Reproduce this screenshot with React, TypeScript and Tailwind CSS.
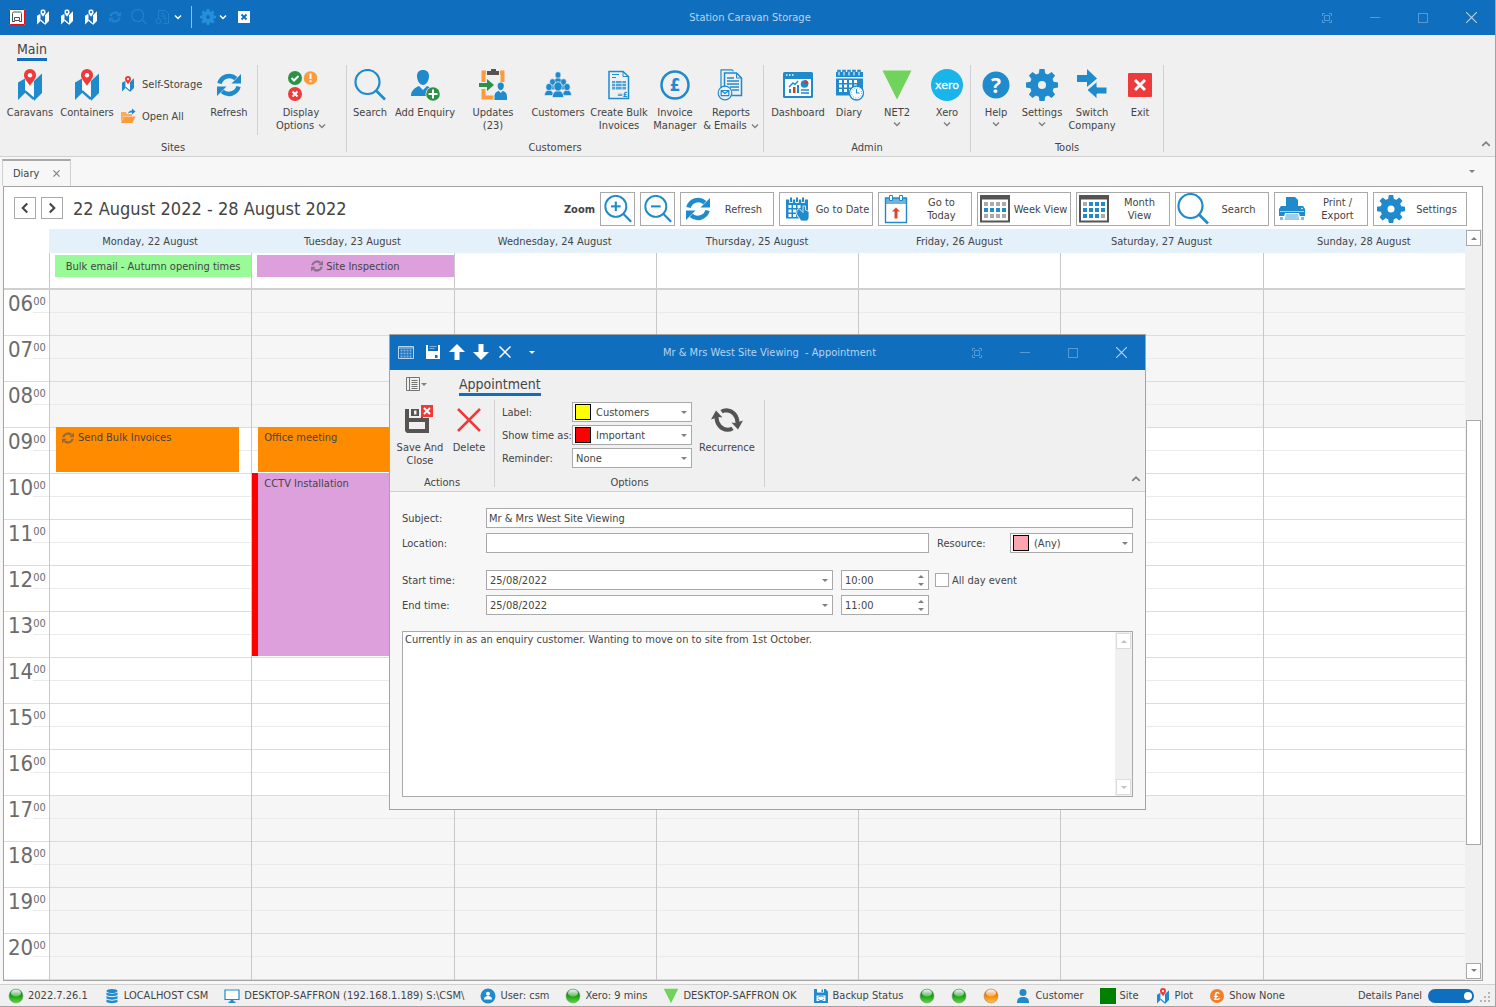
import type { ReactNode } from "react";

const BLUE = "#1f8acc";
const RED = "#ee3a3a";
const GREEN = "#2b9147";
const ORANGE = "#fd9a3c";
const DARK = "#555453";

/* ---------- Icons ---------- */

type IconProps = { className?: string };

function MapIcon({ className = "w-6 h-8", mono = false }: IconProps & { mono?: boolean }) {
  const main = mono ? "#fff" : BLUE;
  return (
    <svg viewBox="0 0 24 32" className={className} aria-hidden="true">
      <path d="M0 13.5 7 9.5V24L0 31z" fill={main} />
      <path d="M16 12 24 4.5V24L16 32z" fill={main} />
      <path d="M7 22 16 30" stroke={main} strokeWidth="2.6" fill="none" />
      {mono ? null : <path d="M7.5 12h8v16l-8-7z" fill="#fff" opacity=".75" />}
      <path
        d="M12 0a6 6 0 0 1 6 6.2c0 4-4 6.800-6 10.800-2-4-6-6.800-6-10.800A6 6 0 0 1 12 0z"
        fill={mono ? "#fff" : RED}
        stroke={mono ? "#106ebe" : "none"}
        strokeWidth={mono ? 1.5 : 0}
      />
      <circle cx="12" cy="6.200" r="2.200" fill={mono ? "#106ebe" : "#fff"} />
    </svg>
  );
}

function RefreshIcon({ className = "w-6 h-6", color = BLUE }: IconProps & { color?: string }) {
  const half = (
    <>
      <path d="M2.500 10.500A10 10 0 0 1 18.800 5.600" fill="none" stroke={color} strokeWidth="4.600" />
      <path d="M24 1v9.500h-9.500z" fill={color} />
    </>
  );
  return (
    <svg viewBox="0 0 24 24" className={className} aria-hidden="true">
      {half}
      <g transform="rotate(180 12 12)">{half}</g>
    </svg>
  );
}

function SearchIcon({ className = "size-8", sign = "", color = BLUE }: IconProps & { sign?: string; color?: string }) {
  return (
    <svg viewBox="0 0 32 32" className={className} fill="none" stroke={color} aria-hidden="true">
      <circle cx="13.500" cy="13" r="12" strokeWidth="2.200" />
      <path d="m22 21.500 9 9" strokeWidth="2.600" />
      {sign ? <path d="M8 13h11" strokeWidth="2.400" /> : null}
      {sign === "+" ? <path d="M13.500 7.500v11" strokeWidth="2.400" /> : null}
    </svg>
  );
}

function GearIcon({ className = "size-8", color = BLUE }: IconProps & { color?: string }) {
  return (
    <svg viewBox="0 0 32 32" className={className} aria-hidden="true">
      <circle cx="16" cy="16" r="8" fill="none" stroke={color} strokeWidth="8" />
      {[0, 45, 90, 135, 180, 225, 270, 315].map((a) => (
        <path key={a} d="M13.500 0h5l1 6h-7z" fill={color} transform={`rotate(${a} 16 16)`} />
      ))}
    </svg>
  );
}

function FolderIcon() {
  return (
    <svg viewBox="0 0 16 16" className="size-4" aria-hidden="true">
      <path d="M1 14V4h5l1 2h5v2H4z" fill={ORANGE} opacity=".8" />
      <path d="M4 8.500h11.500L12.500 15H1z" fill={ORANGE} />
      <path d="M8 5.500c.5-2 2-3 4-3V.5l3.500 3L12 6.500v-2c-1.500 0-2.500.2-4 1z" fill={BLUE} />
    </svg>
  );
}

function DisplayOptionsIcon() {
  return (
    <svg viewBox="0 0 32 32" className="size-8" aria-hidden="true">
      <circle cx="10" cy="9" r="7" fill={GREEN} />
      <path d="m6.500 9 2.500 2.500 4.500-4.500" stroke="#fff" strokeWidth="2" fill="none" />
      <circle cx="25.500" cy="9" r="6.800" fill={ORANGE} />
      <path d="M25.500 4.500v5.500M25.500 11.300v2" stroke="#fff" strokeWidth="2" />
      <circle cx="10" cy="25" r="7" fill={RED} />
      <path d="m7.500 22.500 5 5m0-5-5 5" stroke="#fff" strokeWidth="2" />
    </svg>
  );
}

function Person({ x = 0, y = 0, s = 1, fill = BLUE }: { x?: number; y?: number; s?: number; fill?: string }) {
  return (
    <g transform={`translate(${x} ${y}) scale(${s})`} fill={fill}>
      <path d="M12 0c4 0 6.200 2.500 6 6.500C17.800 11 15 15 12 15S6.200 11 6 6.500C5.800 2.500 8 0 12 0z" />
      <path d="M0 26c0-5 3-8 8-10l4 4 4-4c5 2 8 5 8 10z" />
    </g>
  );
}

function AddEnquiryIcon() {
  return (
    <svg viewBox="0 0 32 32" className="size-8" aria-hidden="true">
      <Person x={2} y={1} />
      <circle cx="24" cy="25" r="7.500" fill="#f0f0f0" />
      <circle cx="24" cy="25" r="6.800" fill={GREEN} />
      <path d="M24 20.500v9M19.500 25h9" stroke="#fff" strokeWidth="2" />
    </svg>
  );
}

function UpdatesIcon() {
  return (
    <svg viewBox="0 0 32 32" className="size-8" aria-hidden="true">
      <path d="M6.500 13V3.500h2.500M23 3.500h2.500V13M6.500 20v8.500h10" fill="none" stroke={ORANGE} strokeWidth="4" />
      <path d="M10 6V2h4V0h5v2h3v4z" fill={DARK} />
      <path d="M2 14h8v-4l7 6-7 6v-4H2z" fill={GREEN} />
      <Person x={17.500} y={13.500} s={0.52} />
      <path d="M17.500 27h12.500v4H17.500z" fill={BLUE} />
    </svg>
  );
}

function CustomersIcon() {
  const members: [number, number, number][] = [
    [16, 6, 0.9],
    [10.500, 13, 0.9],
    [21.500, 13, 0.9],
    [7, 18, 1],
    [25, 18, 1],
    [16, 17.500, 1.300],
  ];
  return (
    <svg viewBox="0 0 32 32" className="size-8" aria-hidden="true">
      {members.map(([x, y, s]) => (
        <g key={`${x}-${y}`} transform={`translate(${x} ${y}) scale(${s})`} fill={BLUE} stroke="#f0f0f0" strokeWidth=".6">
          <path d="M-4.500 8.500C-4.500 5.500-3 4-1.500 3.200h3C3 4 4.500 5.500 4.500 8.500z" />
          <ellipse cx="0" cy="0" rx="3.200" ry="3.600" />
        </g>
      ))}
    </svg>
  );
}

function BulkInvoiceIcon() {
  return (
    <svg viewBox="0 0 32 32" className="size-8" aria-hidden="true">
      <path d="M6 2.500h14l5.500 5V29.500H6z" fill="none" stroke={BLUE} strokeWidth="1.500" />
      <path d="M20 2.500v5h5" fill="none" stroke={BLUE} />
      <path d="M9 5.500h7M9 8.500h4" stroke={BLUE} />
      <path d="M9 12h14v8.500H9z" fill={BLUE} opacity=".75" />
      <path d="M9 14.500h14M9 17.500h14M12.500 12v9M19 12v9" stroke="#fff" strokeWidth=".6" />
      <text x="14" y="28" fontSize="7" fontWeight="700" fontFamily="DejaVu Sans" fill={BLUE}>
        =£
      </text>
    </svg>
  );
}

function PoundIcon() {
  return (
    <svg viewBox="0 0 32 32" className="size-8" aria-hidden="true">
      <circle cx="16" cy="16" r="13.500" fill="none" stroke={BLUE} strokeWidth="2.500" />
      <text x="16" y="22" textAnchor="middle" fontSize="17" fontWeight="700" fontFamily="DejaVu Sans Condensed" fill={BLUE}>
        £
      </text>
    </svg>
  );
}

function ReportsIcon() {
  return (
    <svg viewBox="0 0 32 32" className="size-8" aria-hidden="true">
      <path d="M6 20V.8h11l1.500 1.500" fill="none" stroke={BLUE} strokeWidth="1.200" />
      <path d="M9.500 19V4h12l5 5v17.500H17" fill="#f0f0f0" stroke={BLUE} strokeWidth="1.500" />
      <path d="M21.500 4v5h5" fill="none" stroke={BLUE} />
      <path d="M12 9h7M12 12h12M12 15h12M15 18h9M17 21h7" stroke={BLUE} strokeWidth="1.400" />
      <circle cx="10" cy="24" r="6.800" fill="#f0f0f0" stroke={BLUE} strokeWidth="1.200" />
      <path d="M6.200 21.500h7.600v5.200H6.200zM6.200 21.500l3.800 3 3.800-3" fill="none" stroke={BLUE} strokeWidth="1.200" />
    </svg>
  );
}

function DashboardIcon() {
  return (
    <svg viewBox="0 0 32 32" className="size-8" aria-hidden="true">
      <rect x="1" y="3" width="30" height="26" rx="1.500" fill={BLUE} />
      <path d="M3 10h26v17H3z" fill="#fff" />
      <path d="M4 6h1.500M7 6h1.500M10 6h1.500" stroke="#fff" strokeWidth="1.500" />
      <path d="M7 24v-4h2v4zM15 24v-8h2v8z" fill={BLUE} />
      <path d="M11 24v-6h2.500v6z" fill="#d0401c" />
      <path d="m7 18 4-4 2 1.500 3-3.500" fill="none" stroke={BLUE} strokeWidth="1.400" />
      <circle cx="22.500" cy="15" r="3.800" fill={BLUE} />
      <path d="M22.500 15v-4a4 4 0 0 1 4 4z" fill="#d0401c" />
      <path d="M19 21h8M19 24h8" stroke={BLUE} strokeWidth="1.500" />
    </svg>
  );
}

function DiaryIcon() {
  return (
    <svg viewBox="0 0 32 32" className="size-8" aria-hidden="true">
      <path d="M3 3h27v5H3zM3 9.500h27v17H3z" fill={BLUE} />
      {[5, 10, 15, 20, 25].map((x) => (
        <path key={x} d={`M${x} 5V1.500h2V5`} fill="none" stroke={BLUE} strokeWidth="1.600" />
      ))}
      {[5, 10, 15, 20, 25].map((x) => (
        <path key={x} d={`M${x + 1} 3v3.500`} stroke="#fff" strokeWidth="1" />
      ))}
      {[11, 15.500, 20].map((y) =>
        [6, 11, 16, 21].map((x) => <rect key={`${x}-${y}`} x={x} y={y} width="3" height="3" fill="#fff" />),
      )}
      <circle cx="23.500" cy="24" r="7" fill="#fff" stroke={BLUE} strokeWidth="1.300" />
      <path d="M23.500 20v4h3" fill="none" stroke={BLUE} strokeWidth="1.200" />
      <circle cx="23.500" cy="24" r="5" fill="none" stroke={BLUE} strokeWidth=".8" strokeDasharray="1 1.600" />
    </svg>
  );
}

function TriangleIcon({ className = "size-8" }: IconProps) {
  return (
    <svg viewBox="0 0 32 32" className={className} aria-hidden="true">
      <path d="M1.500 1.500h29L16 30.500z" fill="#70d35c" />
    </svg>
  );
}

function XeroIcon() {
  return (
    <svg viewBox="0 0 32 32" className="size-8" aria-hidden="true">
      <circle cx="16" cy="16" r="16" fill="#18b4ea" />
      <text x="16" y="19.500" textAnchor="middle" fontSize="11" fontWeight="500" fontFamily="DejaVu Sans" fill="#fff" stroke="#fff" strokeWidth=".3">
        xero
      </text>
    </svg>
  );
}

function HelpIcon() {
  return (
    <svg viewBox="0 0 32 32" className="size-8" aria-hidden="true">
      <circle cx="16" cy="16" r="13.500" fill={BLUE} />
      <text x="16" y="23.500" textAnchor="middle" fontSize="21" fontWeight="700" fontFamily="Open Sans" fill="#fff">
        ?
      </text>
    </svg>
  );
}

function SwitchIcon() {
  return (
    <svg viewBox="0 0 32 32" className="size-8" aria-hidden="true">
      <path d="M1 6h10V0l10 9.500L11 18v-5H1z" fill={BLUE} />
      <path d="M31 18H21v-5.500L11 21l10 9v-5h10z" fill={BLUE} stroke="#f0f0f0" strokeWidth="1" />
    </svg>
  );
}

function ExitIcon() {
  return (
    <svg viewBox="0 0 32 32" className="size-8" aria-hidden="true">
      <rect x="4" y="4" width="24" height="24" rx="1" fill={RED} />
      <path d="m11 11 10 10m0-10L11 21" stroke="#fff" strokeWidth="3" />
    </svg>
  );
}

function Chevron({ dir = "down", className = "size-2", color = "#808080" }: IconProps & { dir?: "down" | "up" | "left" | "right"; color?: string }) {
  const d = { down: "m1 2.500 3 3 3-3", up: "m1 5.500 3-3 3 3", left: "M5.500 1l-3 3 3 3", right: "m2.500 1 3 3-3 3" }[dir];
  return (
    <svg viewBox="0 0 8 8" className={className} fill="none" stroke={color} strokeWidth="1.400" aria-hidden="true">
      <path d={d} />
    </svg>
  );
}

function Caret({ up = false, color = "#808080", className = "w-[6px] h-[3px]" }: { up?: boolean; color?: string; className?: string }) {
  return (
    <svg viewBox="0 0 6 3" className={className} aria-hidden="true">
      <path d={up ? "M0 3h6L3 0z" : "M0 0h6L3 3z"} fill={color} />
    </svg>
  );
}

function Ball({ tone }: { tone: "green" | "orange" }) {
  const c = tone === "green" ? ["#14921a", "#52e02a"] : ["#f07800", "#ffc83c"];
  return (
    <svg viewBox="0 0 16 16" className="size-4 shrink-0" aria-hidden="true">
      <defs>
        <linearGradient id={`ball-${tone}`} x1="0" y1="0" x2="0" y2="1">
          <stop offset="0.400" stopColor={c[0]} />
          <stop offset="1" stopColor={c[1]} />
        </linearGradient>
        <linearGradient id="ball-shine" x1="0" y1="0" x2="0" y2="1">
          <stop offset="0" stopColor="#fff" stopOpacity=".95" />
          <stop offset="1" stopColor="#fff" stopOpacity=".3" />
        </linearGradient>
      </defs>
      <circle cx="8" cy="8" r="7" fill={`url(#ball-${tone})`} stroke="#888" strokeWidth=".5" />
      <ellipse cx="8" cy="5" rx="5" ry="3.600" fill="url(#ball-shine)" />
    </svg>
  );
}

/* ---------- Window controls ---------- */

function WindowControls() {
  const base = "flex h-full w-12 items-center justify-center";
  return (
    <>
      <button aria-label="Full screen" className={base}>
        <svg viewBox="0 0 10 10" className="size-[10px]" fill="none" stroke="#589bd4" aria-hidden="true">
          <path d="M.5 3V.5H3M7 .5h2.500V3M9.500 7v2.500H7M3 9.500H.5V7M2.500 2.500h5v5h-5z" />
        </svg>
      </button>
      <button aria-label="Minimise" className={base}>
        <span className="h-px w-[10px] bg-[#589bd4]" />
      </button>
      <button aria-label="Maximise" className={base}>
        <span className="size-[10px] border border-[#589bd4]" />
      </button>
      <button aria-label="Close" className={base}>
        <svg viewBox="0 0 10 10" className="size-[11px]" stroke="#b5d4ee" aria-hidden="true">
          <path d="m0 0 10 10M10 0 0 10" />
        </svg>
      </button>
    </>
  );
}

function TitleBar() {
  const faded = "#2482cc";
  const btn = "flex h-6 w-6 items-center justify-center";
  return (
    <header className="flex h-[35px] items-center bg-[#106ebe] text-[#b7d5ef]">
      <div className="flex flex-1 items-center pb-px pl-[5px]">
        <button aria-label="Application" className={btn}>
          <svg viewBox="0 0 16 16" className="size-4" aria-hidden="true">
            <path d="M0 0h16v16H0z" fill="#fff" />
            <path d="M.5.5h15v15H.5z" fill="none" stroke="#e0121c" />
            <path d="M3.500 12.500v-8c0-1 .5-1.500 1.500-1.500h6c1 0 1.500.5 1.500 1.500v8M5.500 8.500h5v3h-5zM3 12.500h3M10 12.500h3" fill="none" stroke="#4c5560" />
          </svg>
        </button>
        <div className="flex pl-[2px]">
          {["Caravans", "Containers", "Self-Storage"].map((n) => (
            <button key={n} aria-label={n} className={btn}>
              <MapIcon mono className="h-4 w-3" />
            </button>
          ))}
          <button aria-label="Refresh" className={btn}>
            <RefreshIcon className="size-3" color={faded} />
          </button>
          <button aria-label="Search" className={btn}>
            <SearchIcon className="size-4" color={faded} />
          </button>
          <button aria-label="Bulk invoices" className={btn}>
            <svg viewBox="0 0 16 16" className="size-4" fill="none" stroke={faded} aria-hidden="true">
              <path d="M3.500 9V1.500h7l3 3v10h-5M6 4.500h3M6 7h5M8 9.500h3.500M10 12h1.500" />
              <circle cx="3.500" cy="12" r="2.500" />
            </svg>
          </button>
        </div>
        <button aria-label="More" className="flex w-[6px] justify-center">
          <Chevron className="size-2 shrink-0" color="#fff" />
        </button>
        <span className="ml-[10px] h-[22px] w-px bg-[#8fbfe6]" />
        <button aria-label="Settings" className="ml-1 flex h-6 w-6 items-center justify-center">
          <GearIcon className="size-4" color="#2490d8" />
        </button>
        <button aria-label="Settings menu" className="flex w-[6px] justify-center">
          <Chevron className="size-2 shrink-0" color="#fff" />
        </button>
        <button aria-label="Exit" className="ml-3 flex size-3 items-center justify-center bg-white">
          <svg viewBox="0 0 8 8" className="size-2" stroke="#106ebe" strokeWidth="1.800" aria-hidden="true">
            <path d="m1.500 1.500 5 5m0-5-5 5" />
          </svg>
        </button>
      </div>
      <h1>Station Caravan Storage</h1>
      <div className="flex h-full flex-1 items-center justify-end">
        <WindowControls />
      </div>
    </header>
  );
}

/* ---------- Ribbon ---------- */

type RibbonItem = { icon: ReactNode; lines: string[]; width: string; menu?: boolean };

function RibbonButton({ icon, lines, width, menu }: RibbonItem) {
  return (
    <button className={`flex flex-col items-center whitespace-nowrap ${width}`}>
      <span className="flex h-10 items-center justify-center">{icon}</span>
      <span className="mt-px leading-[13px]">
        {lines[0]}
        {lines[1] ? (
          <>
            <br />
            {lines[1]}
          </>
        ) : null}
        {menu && lines[1] ? <Chevron className="ml-1 inline size-2" /> : null}
      </span>
      {menu && !lines[1] ? <Chevron className="mt-px size-2" /> : null}
    </button>
  );
}

function RibbonGroup({ label, children }: { label: string; children: ReactNode }) {
  return (
    <section className="flex h-[87px] flex-col border-r border-[#d0d0d0]">
      <div className="flex flex-1 items-start px-[2px]">{children}</div>
      <h2 className="h-2 text-center leading-2">{label}</h2>
    </section>
  );
}

const customerItems: RibbonItem[] = [
  { icon: <SearchIcon />, lines: ["Search"], width: "w-[42px]" },
  { icon: <AddEnquiryIcon />, lines: ["Add Enquiry"], width: "w-[68px]" },
  { icon: <UpdatesIcon />, lines: ["Updates", "(23)"], width: "w-[68px]" },
  { icon: <CustomersIcon />, lines: ["Customers"], width: "w-[62px]" },
  { icon: <BulkInvoiceIcon />, lines: ["Create Bulk", "Invoices"], width: "w-[60px]" },
  { icon: <PoundIcon />, lines: ["Invoice", "Manager"], width: "w-[52px]" },
  { icon: <ReportsIcon />, lines: ["Reports", "& Emails"], width: "w-[60px]", menu: true },
];

const adminItems: RibbonItem[] = [
  { icon: <DashboardIcon />, lines: ["Dashboard"], width: "w-[64px]" },
  { icon: <DiaryIcon />, lines: ["Diary"], width: "w-[38px]" },
  { icon: <TriangleIcon />, lines: ["NET2"], width: "w-[58px]", menu: true },
  { icon: <XeroIcon />, lines: ["Xero"], width: "w-[42px]", menu: true },
];

const toolItems: RibbonItem[] = [
  { icon: <HelpIcon />, lines: ["Help"], width: "w-[46px]", menu: true },
  { icon: <GearIcon />, lines: ["Settings"], width: "w-[46px]", menu: true },
  { icon: <SwitchIcon />, lines: ["Switch", "Company"], width: "w-[54px]" },
  { icon: <ExitIcon />, lines: ["Exit"], width: "w-[42px]" },
];

function Ribbon() {
  return (
    <div className="flex items-end border-b border-[#d0d0d0] bg-[#f0f0f0]">
      <div className="flex-1">
        <nav className="flex h-[30px] pl-[17px] pt-[5px]">
          <button className="h-[21px] border-b-[3px] border-[#106ebe] text-[14px] leading-[18px]">Main</button>
        </nav>
        <div className="flex h-[91px]">
          <RibbonGroup label="Sites">
            <RibbonButton icon={<MapIcon />} lines={["Caravans"]} width="w-[56px]" />
            <RibbonButton icon={<MapIcon />} lines={["Containers"]} width="w-[58px]" />
            <div className="flex w-[90px] flex-col gap-4 pl-1 pt-[11px]">
              <button className="flex h-4 items-center gap-[6px] whitespace-nowrap">
                <span className="flex w-4 justify-center">
                  <MapIcon className="h-4 w-3" />
                </span>
                Self-Storage
              </button>
              <button className="flex h-4 items-center gap-[6px] whitespace-nowrap">
                <FolderIcon />
                Open All
              </button>
            </div>
            <RibbonButton icon={<RefreshIcon />} lines={["Refresh"]} width="w-[46px]" />
            <span className="ml-[5px] h-[70px] w-px bg-[#d0d0d0]" />
            <RibbonButton icon={<DisplayOptionsIcon />} lines={["Display", "Options"]} width="w-[86px]" menu />
          </RibbonGroup>
          <RibbonGroup label="Customers">
            {customerItems.map((i) => (
              <RibbonButton key={i.lines[0]} {...i} />
            ))}
          </RibbonGroup>
          <RibbonGroup label="Admin">
            {adminItems.map((i) => (
              <RibbonButton key={i.lines[0]} {...i} />
            ))}
          </RibbonGroup>
          <RibbonGroup label="Tools">
            {toolItems.map((i) => (
              <RibbonButton key={i.lines[0]} {...i} />
            ))}
          </RibbonGroup>
        </div>
      </div>
      <button aria-label="Collapse ribbon" className="mb-[7px] mr-1">
        <Chevron dir="up" className="size-[10px]" />
      </button>
    </div>
  );
}

/* ---------- Diary ---------- */

function ToolButton({ icon, children }: { icon: ReactNode; children: ReactNode }) {
  return (
    <button className="flex h-[34px] w-[94px] items-center border border-[#a9a9a9] bg-white pl-px leading-[13px]">
      <span className="flex w-8 shrink-0 justify-center">{icon}</span>
      <span className="flex-1 text-center whitespace-nowrap">{children}</span>
    </button>
  );
}

function CalendarGlyph({ month }: { month: boolean }) {
  const cells = [0, 1, 2, 3];
  return (
    <svg viewBox="0 0 32 28" className="h-7 w-8" aria-hidden="true">
      <path d="M2 1h28v25.500H2z" fill="#fff" stroke={DARK} strokeWidth="2" />
      <path d="M1 0h30v4.500H1z" fill={DARK} />
      {[0, 1, 2].map((r) =>
        cells.map((c) => {
          const on = month ? !((r === 0 && c === 0) || (r === 2 && c === 3)) : r === 1;
          return <rect key={`${r}${c}`} x={5 + c * 6} y={7 + r * 6} width="4" height="4" fill={on ? BLUE : "#aaa"} />;
        }),
      )}
    </svg>
  );
}

function GoToDateIcon() {
  return (
    <svg viewBox="0 0 32 32" className="size-8" aria-hidden="true">
      <path d="M5 6.500h22v19H5z" fill={BLUE} />
      <path d="M10 10V5.500M16 10V5.500M22 10V5.500" stroke="#fff" strokeWidth="3.500" />
      <path d="M10 9V4.500M16 9V4.500M22 9V4.500" stroke={BLUE} strokeWidth="2" />
      {[12, 16.500, 21].map((y) => [7.500, 12, 16.500].map((x) => <rect key={`${x}-${y}`} x={x} y={y} width="3" height="3" fill="#fff" />))}
      <path d="m16 17 2-1.500 4 4V13h2.500v4l3.500 1.500V25l-1.500 3H20l-4.500-7z" fill={BLUE} stroke="#fff" strokeWidth=".8" />
    </svg>
  );
}

function TodayIcon() {
  return (
    <svg viewBox="0 0 32 32" className="size-8" aria-hidden="true">
      <path d="M5.500 5h21v24.500h-21z" fill="#fff" stroke={BLUE} strokeWidth="1.400" />
      <path d="M5 5h22v6H5z" fill={BLUE} opacity=".65" />
      <path d="M9.500 2.500h3v5h-3zM19.500 2.500h3v5h-3z" fill="#fff" stroke={BLUE} />
      <path d="m16 14.500 4 4h-2.500v7h-3v-7H12z" fill="#d8482c" />
    </svg>
  );
}

function PrintIcon() {
  return (
    <svg viewBox="0 0 32 32" className="size-8" aria-hidden="true">
      <path d="M10 4h9l3 3v6H10z" fill={BLUE} />
      <path d="M5 13h22l2 3v7H3v-7z" fill={BLUE} />
      <path d="M4 18h24v1H4z" fill="#a8d2ec" />
      <path d="M9 20h14l2 8H7z" fill="#fff" />
      <path d="M10 21h12l1.500 6h-15z" fill="#9fcdea" />
      <path d="M4 24h3v3H4zM25 24h3v3h-3z" fill="#7dbbe2" />
      <circle cx="26" cy="15.500" r=".8" fill="#fff" />
    </svg>
  );
}

const hours = Array.from({ length: 15 }, (_, i) => i + 6);
const ROW = 46;

type DayEvent = { title: string; start: number; end: number; color: string; busy?: boolean; recurring?: boolean };
type Day = { name: string; allDay?: { title: string; color: string; recurring?: boolean }; events: DayEvent[] };

const days: Day[] = [
  {
    name: "Monday, 22 August",
    allDay: { title: "Bulk email - Autumn opening times", color: "bg-[#98fb98]" },
    events: [{ title: "Send Bulk Invoices", start: 9, end: 10, color: "bg-[#ff8c00]", recurring: true }],
  },
  {
    name: "Tuesday, 23 August",
    allDay: { title: "Site Inspection", color: "bg-[#dda0dd]", recurring: true },
    events: [
      { title: "Office meeting", start: 9, end: 10, color: "bg-[#ff8c00]" },
      { title: "CCTV Installation", start: 10, end: 14, color: "bg-[#dda0dd]", busy: true },
    ],
  },
  { name: "Wednesday, 24 August", events: [] },
  { name: "Thursday, 25 August", events: [] },
  { name: "Friday, 26 August", events: [] },
  { name: "Saturday, 27 August", events: [] },
  { name: "Sunday, 28 August", events: [] },
];

function DayColumn({ day }: { day: Day }) {
  return (
    <div className="relative min-w-0 flex-1 border-l border-[#c8c8c8]">
      {hours.map((h) => (
        <div key={h} className={h >= 9 && h < 17 ? "bg-white" : "bg-[#f6f6f6]"}>
          <div className="h-[23px] border-b border-[#ebebeb]" />
          <div className="h-[23px] border-b border-[#dcdcdc]" />
        </div>
      ))}
      {day.events.map((e) => (
        <div
          key={e.title}
          className="absolute left-0 right-3 flex"
          style={{ top: (e.start - 6) * ROW - 1, height: (e.end - e.start) * ROW - 1 }}
        >
          <span className={`w-[6px] shrink-0 ${e.busy ? "bg-[#ff0000]" : ""}`} />
          <span className={`flex flex-1 items-start gap-1 px-[6px] pt-1 ${e.color}`}>
            {e.recurring ? <RefreshIcon className="mt-px size-3 opacity-60" color="#555" /> : null}
            {e.title}
          </span>
        </div>
      ))}
    </div>
  );
}

function ScrollButton({ up = false }: { up?: boolean }) {
  return (
    <button aria-label={up ? "Scroll up" : "Scroll down"} className="flex h-4 w-[15px] shrink-0 items-center justify-center border border-[#a9a9a9] bg-white">
      <Caret up={up} />
    </button>
  );
}

function Diary() {
  return (
    <section className="ml-[3px] mr-3 flex-1 border border-[#a3a3a3] bg-white">
      <div className="flex h-[42px] items-center pl-[10px] pr-[15px]">
        <button aria-label="Previous week" className="flex size-[22px] items-center justify-center border border-[#a9a9a9]">
          <Chevron dir="left" className="size-3" color="#444" />
        </button>
        <button aria-label="Next week" className="ml-[5px] flex size-[22px] items-center justify-center border border-[#a9a9a9]">
          <Chevron dir="right" className="size-3" color="#444" />
        </button>
        <h2 className="ml-[10px] flex-1 whitespace-nowrap text-[18px]">22 August 2022 - 28 August 2022</h2>
        <div className="flex items-center gap-[5px] pt-[2px]">
          <span className="font-bold">Zoom</span>
          <button aria-label="Zoom in" className="flex h-[34px] w-[35px] items-center justify-center border border-[#a9a9a9]">
            <SearchIcon className="size-7" sign="+" />
          </button>
          <button aria-label="Zoom out" className="flex h-[34px] w-[35px] items-center justify-center border border-[#a9a9a9]">
            <SearchIcon className="size-7" sign="-" />
          </button>
          <ToolButton icon={<RefreshIcon />}>Refresh</ToolButton>
          <ToolButton icon={<GoToDateIcon />}>Go to Date</ToolButton>
          <ToolButton icon={<TodayIcon />}>
            Go to
            <br />
            Today
          </ToolButton>
          <ToolButton icon={<CalendarGlyph month={false} />}>Week View</ToolButton>
          <ToolButton icon={<CalendarGlyph month />}>
            Month
            <br />
            View
          </ToolButton>
          <ToolButton icon={<SearchIcon />}>Search</ToolButton>
          <ToolButton icon={<PrintIcon />}>
            Print /<br />
            Export
          </ToolButton>
          <ToolButton icon={<GearIcon className="size-7" />}>Settings</ToolButton>
        </div>
      </div>

      <div className="flex">
        <div className="min-w-0 flex-1">
          <div className="flex h-6 pl-[45px]">
            {days.map((d) => (
              <div key={d.name} className="flex-1 bg-[#e5f1fa] text-center leading-[25px]">
                {d.name}
              </div>
            ))}
          </div>
          <div className="flex h-[37px] border-b-2 border-[#d0d0d0] pl-[45px]">
            {days.map((d) => (
              <div key={d.name} className="min-w-0 flex-1 border-l border-[#c8c8c8] pl-[5px] pt-[2px]">
                {d.allDay ? (
                  <div className={`flex h-[22px] items-center justify-center gap-[3px] whitespace-nowrap ${d.allDay.color}`}>
                    {d.allDay.recurring ? <RefreshIcon className="size-3 opacity-60" color="#555" /> : null}
                    {d.allDay.title}
                  </div>
                ) : null}
              </div>
            ))}
          </div>
          <div className="flex">
            <div className="w-[45px] shrink-0 text-[#6b6b6b]">
              {hours.map((h) => (
                <div key={h} className="flex h-[46px] items-start border-b border-[#dcdcdc] pl-1">
                  <span className="pt-[2px] text-[22px] leading-6">{String(h).padStart(2, "0")}</span>
                  <span className="h-[23px] flex-1 border-b border-[#ebebeb] pt-[5px] leading-[13px]">00</span>
                </div>
              ))}
            </div>
            {days.map((d) => (
              <DayColumn key={d.name} day={d} />
            ))}
          </div>
        </div>
        <div className="flex w-[17px] shrink-0 flex-col items-center bg-[#f0f0f0] py-px">
          <ScrollButton up />
          <span className="grow-[174]" />
          <span className="w-[15px] grow-[424] border border-[#a9a9a9] bg-white" />
          <span className="grow-[118]" />
          <ScrollButton />
        </div>
      </div>
    </section>
  );
}

/* ---------- Appointment window ---------- */

const field = "h-5 border border-[#a9a9a9] bg-white px-[2px] outline-none";

function ColorSelect({ id, value, swatch, className = "" }: { id: string; value: string; swatch?: string; className?: string }) {
  return (
    <span className={`relative flex ${className}`}>
      <select id={id} defaultValue={value} className={`h-5 w-full appearance-none border border-[#a9a9a9] bg-white outline-none ${swatch ? "pl-[23px]" : "pl-[3px]"}`}>
        <option>{value}</option>
      </select>
      {swatch ? <span className={`pointer-events-none absolute left-[3px] top-[2px] size-4 border border-black ${swatch}`} /> : null}
      <span className="pointer-events-none absolute right-[5px] top-[9px]">
        <Caret className="block h-[3px] w-[6px]" />
      </span>
    </span>
  );
}

function DateField({ id, value }: { id: string; value: string }) {
  return (
    <span className="flex h-5 flex-1 items-center border border-[#a9a9a9] bg-white pl-[3px] pr-1">
      <input id={id} defaultValue={value} className="w-full min-w-0 flex-1 outline-none" />
      <button type="button" aria-label="Pick date">
        <Caret className="block h-[3px] w-[6px]" />
      </button>
    </span>
  );
}

function TimeField({ label, value }: { label: string; value: string }) {
  return (
    <span className="ml-2 flex h-5 w-[88px] items-center border border-[#a9a9a9] bg-white pl-[3px] pr-1">
      <input aria-label={label} defaultValue={value} className="w-full min-w-0 flex-1 outline-none" />
      <span className="flex flex-col gap-[5px]">
        <button type="button" aria-label="Later">
          <Caret up className="block h-[3px] w-[6px]" />
        </button>
        <button type="button" aria-label="Earlier">
          <Caret className="block h-[3px] w-[6px]" />
        </button>
      </span>
    </span>
  );
}

function AppointmentWindow() {
  const qa = "flex h-6 w-6 items-center justify-center";
  return (
    <div role="dialog" aria-label="Appointment" className="absolute left-[389px] top-[334px] flex w-[757px] flex-col border border-[#a3a3a3] bg-[#f7f7f7]">
      <header className="flex h-[35px] items-center bg-[#106ebe] text-[#b7d5ef]">
        <div className="flex flex-1 items-center pb-px pl-1">
          <span className="mr-[3px] flex h-6 w-6 items-center justify-center">
            <svg viewBox="0 0 16 14" className="h-[14px] w-4" fill="none" stroke="#b7d5ef" aria-hidden="true">
              <path d="M.5 1.500h15v12H.5z" />
              <path d="M1 3h14" />
              <path d="M2.500 5.500h11M2.500 8.500h11M2.500 11.500h11" stroke="#7fb4e2" strokeDasharray="2 1" strokeWidth="2" />
            </svg>
          </span>
          <button aria-label="Save" className={qa}>
            <svg viewBox="0 0 14 14" className="size-[14px]" aria-hidden="true">
              <path d="M0 0h14v14H0z" fill="#fff" />
              <path d="M2 0h10v6H2z" fill="#106ebe" />
              <path d="M3.500 1.500h7M3.500 3.500h5" stroke="#7fb4e2" />
              <path d="M9 10h2.500v3H9z" fill="#106ebe" />
            </svg>
          </button>
          <button aria-label="Previous" className={qa}>
            <svg viewBox="0 0 16 16" className="size-4" fill="#fff" aria-hidden="true">
              <path d="M8 0l8 8h-5.500v8h-5V8H0z" />
            </svg>
          </button>
          <button aria-label="Next" className={qa}>
            <svg viewBox="0 0 16 16" className="size-4" fill="#fff" aria-hidden="true">
              <path d="M8 16 0 8h5.500V0h5v8H16z" />
            </svg>
          </button>
          <button aria-label="Delete" className={qa}>
            <svg viewBox="0 0 12 12" className="size-3" stroke="#fff" strokeWidth="1.500" aria-hidden="true">
              <path d="m.5.500 11 11m0-11-11 11" />
            </svg>
          </button>
          <button aria-label="Customise" className="ml-3">
            <Caret color="#fff" className="block h-[3px] w-[6px]" />
          </button>
        </div>
        <h2 className="whitespace-pre">{"Mr & Mrs West Site Viewing  - Appointment"}</h2>
        <div className="flex h-full flex-1 items-center justify-end">
          <WindowControls />
        </div>
      </header>

      <div className="flex items-end border-b border-[#d0d0d0] bg-[#f0f0f0]">
        <div className="flex-1">
          <nav className="flex h-[30px] pt-[5px]">
            <button aria-label="File" className="flex h-[18px] w-[69px] items-center gap-px pl-4">
              <svg viewBox="0 0 14 14" className="size-[14px]" fill="none" stroke="#737373" aria-hidden="true">
                <path d="M.5.500h13v13H.5zM3.500 0v14M5.500 3.500h6M5.500 5.500h6M5.500 7.500h6M5.500 9.500h6M5.500 11.500h6" />
              </svg>
              <Caret />
            </button>
            <button className="h-[21px] border-b-[3px] border-[#106ebe] text-[14px] leading-[18px]">Appointment</button>
          </nav>
          <div className="flex h-[91px]">
            <RibbonGroup label="Actions">
              <RibbonButton
                width="w-[56px]"
                lines={["Save And", "Close"]}
                icon={
                  <svg viewBox="0 0 32 32" className="size-8" aria-hidden="true">
                    <path d="M1 5h4v9h12V5h2v9h6v15H3l-2-2z" fill={DARK} />
                    <path d="M7 5h8v7H7z" fill={DARK} />
                    <path d="M10 6.500h2.500v4H10zM5 18h16v7H5z" fill="#f0f0f0" />
                    <path d="M17 1h12v12H17z" fill={RED} />
                    <path d="m20 4 6 6m0-6-6 6" stroke="#fff" strokeWidth="2" />
                  </svg>
                }
              />
              <RibbonButton
                width="w-[42px]"
                lines={["Delete"]}
                icon={
                  <svg viewBox="0 0 24 24" className="size-6" stroke={RED} strokeWidth="2.500" aria-hidden="true">
                    <path d="m1 1 22 22M23 1 1 23" />
                  </svg>
                }
              />
              <span className="w-[2px]" />
            </RibbonGroup>
            <RibbonGroup label="Options">
              <div className="grid grid-cols-[70px_120px] items-center gap-y-[3px] whitespace-nowrap pl-[5px] pt-[2px]">
                <label htmlFor="label">Label:</label>
                <ColorSelect id="label" value="Customers" swatch="bg-[#ffff00]" />
                <label htmlFor="show-as">Show time as:</label>
                <ColorSelect id="show-as" value="Important" swatch="bg-[#ff0000]" />
                <label htmlFor="reminder">Reminder:</label>
                <ColorSelect id="reminder" value="None" />
              </div>
              <RibbonButton
                width="w-[70px]"
                lines={["Recurrence"]}
                icon={
                  <svg viewBox="0 0 32 24" className="h-6 w-8" aria-hidden="true">
                    <path d="M5.500 9c0 7 4.500 12.500 11 12.800 2 0 3.500-.5 5-1.500" fill="none" stroke={DARK} strokeWidth="4" />
                    <path d="M0 11.500 5 2.500l6.500 7-4-.5z" fill={DARK} />
                    <path d="M26.500 15c0-7-4.500-12.500-11-12.800-2 0-3.500.5-5 1.500" fill="none" stroke={DARK} strokeWidth="4" />
                    <path d="M32 12.500 27 21.500l-6.500-7 4 .5z" fill={DARK} />
                  </svg>
                }
              />
            </RibbonGroup>
          </div>
        </div>
        <button aria-label="Collapse ribbon" className="mb-[7px] mr-1">
          <Chevron dir="up" className="size-[10px]" />
        </button>
      </div>

      <form className="flex flex-col pb-3 pl-3 pr-3 pt-4">
        <div className="flex items-center">
          <label htmlFor="subject" className="w-[84px]">
            Subject:
          </label>
          <input id="subject" defaultValue="Mr & Mrs West Site Viewing" className={`${field} min-w-0 flex-1`} />
        </div>
        <div className="mt-[5px] flex items-center">
          <label htmlFor="location" className="w-[84px]">
            Location:
          </label>
          <input id="location" defaultValue="" className={`${field} min-w-0 flex-1`} />
          <label htmlFor="resource" className="ml-2 w-[73px]">
            Resource:
          </label>
          <ColorSelect id="resource" value="(Any)" swatch="bg-[#fca5b0]" className="w-[123px]" />
        </div>
        <div className="mt-[17px] flex items-center">
          <label htmlFor="start" className="w-[84px]">
            Start time:
          </label>
          <DateField id="start" value="25/08/2022" />
          <TimeField label="Start hour" value="10:00" />
          <label className="flex w-[204px] items-center gap-[3px] pl-[6px]">
            <input type="checkbox" className="size-[14px] appearance-none border border-[#a9a9a9] bg-white" />
            All day event
          </label>
        </div>
        <div className="mt-[5px] flex items-center pr-[204px]">
          <label htmlFor="end" className="w-[84px]">
            End time:
          </label>
          <DateField id="end" value="25/08/2022" />
          <TimeField label="End hour" value="11:00" />
        </div>
        <div className="mt-4 flex h-[166px] border border-[#a9a9a9] bg-white">
          <textarea
            aria-label="Notes"
            className="flex-1 resize-none px-[2px] pt-px leading-[13px] outline-none"
            defaultValue="Currently in as an enquiry customer. Wanting to move on to site from 1st October."
          />
          <div className="flex w-[17px] flex-col items-center justify-between bg-[#f0f0f0] py-px">
            {[true, false].map((up) => (
              <button key={String(up)} type="button" aria-label={up ? "Scroll notes up" : "Scroll notes down"} className="flex h-4 w-[15px] items-center justify-center border border-[#dcdcdc] bg-white">
                <Caret up={up} color="#c0c0c0" />
              </button>
            ))}
          </div>
        </div>
      </form>
    </div>
  );
}

/* ---------- Status bar ---------- */

function Status({ icon, children }: { icon: ReactNode; children?: ReactNode }) {
  return (
    <span className="flex items-center gap-1 whitespace-nowrap">
      <span className="flex w-4 shrink-0 justify-center">{icon}</span>
      {children}
    </span>
  );
}

function StatusBar() {
  return (
    <footer className="mt-[3px] flex h-[23px] items-center gap-4 border-y border-t-[#d0d0d0] border-b-[#a3a3a3] bg-[#f0f0f0] pl-2 pr-[3px]">
      <Status icon={<Ball tone="green" />}>2022.7.26.1</Status>
      <Status
        icon={
          <svg viewBox="0 0 16 16" className="size-4" aria-hidden="true">
            <ellipse cx="8" cy="3" rx="5.500" ry="2" fill={BLUE} />
            <path d="M2.500 4.500c2 1.500 9 1.500 11 0V7c-2 1.500-9 1.500-11 0zM2.500 8c2 1.500 9 1.500 11 0v2.500c-2 1.500-9 1.500-11 0zM2.500 11.500c2 1.500 9 1.500 11 0V14c-2 1.500-9 1.500-11 0z" fill={BLUE} />
          </svg>
        }
      >
        LOCALHOST CSM
      </Status>
      <Status
        icon={
          <svg viewBox="0 0 16 16" className="size-4" aria-hidden="true">
            <path d="M1 2h14v9.500H1z" fill="#fff" stroke={BLUE} strokeWidth="1.200" />
            <path d="M6.500 12h3v1.500h2V15h-7v-1.500h2z" fill={BLUE} />
          </svg>
        }
      >
        DESKTOP-SAFFRON (192.168.1.189) S:\CSM\
      </Status>
      <Status
        icon={
          <svg viewBox="0 0 16 16" className="size-4" aria-hidden="true">
            <circle cx="8" cy="8" r="7.500" fill={BLUE} />
            <circle cx="8" cy="5.700" r="2" fill="#fff" />
            <path d="M4 11.500c0-2 1.500-3.500 4-3.500s4 1.500 4 3.500z" fill="#fff" />
          </svg>
        }
      >
        User: csm
      </Status>
      <Status icon={<Ball tone="green" />}>Xero: 9 mins</Status>
      <Status icon={<TriangleIcon className="size-4" />}>DESKTOP-SAFFRON OK</Status>
      <Status
        icon={
          <svg viewBox="0 0 16 16" className="size-4" aria-hidden="true">
            <path d="M1 1h11.500L15 3.500V15H1z" fill={BLUE} />
            <path d="M4 1h7v3.500H4z" fill="#fff" />
            <path d="M8.500 1.500h1.500V4H8.500z" fill={BLUE} />
            <path d="M3.500 7.500h9V13h-9z" fill="#fff" />
            <path d="M5 9.500c1-2 5-2 6 0M11 11c-1 2-5 2-6 0" fill="none" stroke={BLUE} />
          </svg>
        }
      >
        Backup Status
      </Status>
      <Status icon={<Ball tone="green" />} />
      <Status icon={<Ball tone="green" />} />
      <Status icon={<Ball tone="orange" />} />
      <Status
        icon={
          <svg viewBox="0 0 16 16" className="size-4" aria-hidden="true">
            <circle cx="8" cy="4.500" r="3.500" fill={BLUE} />
            <path d="M2 15c0-4 1.500-6 6-6s6 2 6 6z" fill={BLUE} />
          </svg>
        }
      >
        Customer
      </Status>
      <Status icon={<span className="size-4 bg-[#008000]" />}>Site</Status>
      <Status icon={<MapIcon className="h-4 w-3" />}>Plot</Status>
      <Status
        icon={
          <svg viewBox="0 0 16 16" className="size-4" aria-hidden="true">
            <circle cx="8" cy="8" r="7" fill="#f0802a" />
            <text x="8" y="12" textAnchor="middle" fontSize="11" fontWeight="700" fontFamily="Liberation Sans" fill="#fff">
              £
            </text>
          </svg>
        }
      >
        Show None
      </Status>
      <span className="ml-auto flex items-center gap-[6px]">
        <label htmlFor="details" className="whitespace-nowrap">
          Details Panel
        </label>
        <span className="relative flex h-[14px] w-[46px]">
          <input id="details" type="checkbox" defaultChecked className="h-[14px] w-[46px] appearance-none rounded-full bg-[#106ebe]" />
          <span className="pointer-events-none absolute right-[2px] top-[3px] size-2 rounded-full bg-white" />
        </span>
        <svg viewBox="0 0 12 12" className="mt-1 size-3" fill="#b5b5b5" aria-hidden="true">
          <path d="M8 0h2v2H8zM4 4h2v2H4zM8 4h2v2H8zM0 8h2v2H0zM4 8h2v2H4zM8 8h2v2H8z" />
        </svg>
      </span>
    </footer>
  );
}

export default function App() {
  return (
    <div className="relative flex min-h-screen flex-col border-r border-[#a3a3a3] bg-[#f7f7f7] font-['DejaVu_Sans_Condensed','Noto_Sans',sans-serif] text-[11px] leading-[13px] text-[#444]">
      <TitleBar />
      <Ribbon />
      <div className="flex h-[29px] items-end justify-between pl-[2px] pr-5">
        <div className="flex h-[27px] items-center border-x border-t-2 border-x-[#d0d0d0] border-t-[#a9a9a9] pl-[10px] pr-[10px]">
          <button className="w-10 text-left">Diary</button>
          <button aria-label="Close tab">
            <svg viewBox="0 0 8 8" className="size-[7px]" stroke="#808080" strokeWidth="1.400" aria-hidden="true">
              <path d="m.5.500 7 7m0-7-7 7" />
            </svg>
          </button>
        </div>
        <button aria-label="Open tabs" className="mb-[13px]">
          <Caret className="block h-[3px] w-[6px]" />
        </button>
      </div>
      <Diary />
      <StatusBar />
      <AppointmentWindow />
    </div>
  );
}
